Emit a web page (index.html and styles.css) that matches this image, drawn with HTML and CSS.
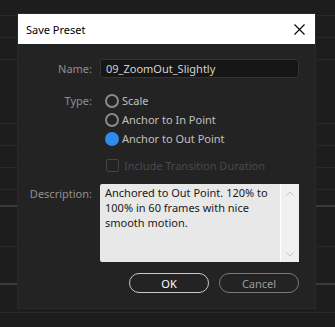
FILE: index.html
```html
<!DOCTYPE html>
<html>
<head>
    <link rel="stylesheet" href="styles.css">
</head>
<body>

    <div class="panel">
        <div class="row" style="height: 15px"></div>
        <div class="row" style="height: 21px"></div>
        <div class="row" style="height: 21px"></div>
        <div class="row" style="height: 63px"></div>
        <div class="row" style="height: 21px"></div>
        <div class="row" style="height: 21px"></div>
        <div class="row" style="height: 21px"></div>
        <div class="row bright" style="height: 15px"></div>
        <div class="row" style="height: 39px"></div>
        <div class="row bright" style="height: 36px"></div>
        <div class="row" style="height: 27px"></div>
        <div class="row" style="height: 22px"></div>
    </div>

    <div class="dialog">
        <div class="titlebar">
            <span>Save Preset</span>
            <svg class="close" width="11" height="11" viewBox="0 0 11 11">
                <path d="M0.5 0.5 L10.5 10.5 M10.5 0.5 L0.5 10.5" stroke="#000" stroke-width="1.1" fill="none"/>
            </svg>
        </div>

        <div class="body">
            <div class="field name-row">
                <label>Name:</label>
                <div class="input">09_ZoomOut_Slightly</div>
            </div>

            <div class="field type-row">
                <label>Type:</label>
                <div class="radios">
                    <div class="radio"><span class="dot"></span>Scale</div>
                    <div class="radio"><span class="dot"></span>Anchor to In Point</div>
                    <div class="radio"><span class="dot on"></span>Anchor to Out Point</div>
                </div>
            </div>

            <div class="field check-row">
                <label></label>
                <div class="check"><span class="box"></span>Include Transition Duration</div>
            </div>

            <div class="field desc-row">
                <label>Description:</label>
                <div class="textarea">
                    <p>Anchored to Out Point. 120% to 100% in 60 frames with nice smooth motion.</p>
                    <div class="scroll">
                        <svg width="8" height="5" viewBox="0 0 8 5"><path d="M0.5 4.5 L4 1 L7.5 4.5" stroke="#c4c4c4" fill="none"/></svg>
                        <svg width="8" height="5" viewBox="0 0 8 5"><path d="M0.5 0.5 L4 4 L7.5 0.5" stroke="#c4c4c4" fill="none"/></svg>
                    </div>
                </div>
            </div>

            <div class="buttons">
                <button class="ok">OK</button>
                <button class="cancel">Cancel</button>
            </div>
        </div>
    </div>

</body>
</html>
```

FILE: styles.css
```css
body {
    margin: 0;
    background-color: #1d1d1d;
    font-family: "Noto Sans", "Open Sans", sans-serif;
    font-size: 11px;
    width: 335px;
    height: 327px;
    overflow: hidden;
    position: relative;
}

.panel {
    display: flex;
    flex-direction: column;
}

.row {
    border-bottom: 1px solid #292929;
}

.row.bright {
    border-bottom: 2px solid #3a3a3a;
}

.dialog {
    position: absolute;
    left: 18px;
    top: 14px;
    width: 297px;
    background-color: #232323;
    box-shadow: 0 0 0 1px #2a2a2a;
}

.titlebar {
    height: 30px;
    background-color: white;
    color: black;
    display: flex;
    align-items: center;
    justify-content: space-between;
    padding: 0 10px 0 8px;
    font-size: 11px;
}

.body {
    padding: 15px 16px 15px 0;
}

.field {
    display: grid;
    grid-template-columns: 74px 1fr;
    column-gap: 8px;
}

.field label {
    color: #8f8f8f;
    text-align: right;
}

.name-row {
    align-items: center;
}

.input {
    height: 17px;
    background-color: #161616;
    border: 1px solid #333;
    border-radius: 3px;
    color: #d2d2d2;
    padding-left: 5px;
    line-height: 17px;
}

.type-row {
    margin-top: 14px;
}

.type-row label {
    line-height: 17px;
}

.radios {
    display: flex;
    flex-direction: column;
    gap: 2px;
}

.radio {
    display: flex;
    align-items: center;
    height: 17px;
    color: #c0c0c0;
    padding-left: 5px;
}

.dot {
    width: 10px;
    height: 10px;
    border: 2px solid #8a8a8a;
    border-radius: 50%;
    margin-right: 3px;
}

.dot.on {
    border-color: #2d8ceb;
    background-color: #2d8ceb;
}

.check-row {
    margin-top: 11px;
}

.check {
    display: flex;
    align-items: center;
    height: 14px;
    padding-left: 6px;
    color: #4a4a4a;
}

.box {
    width: 11px;
    height: 11px;
    border: 1px solid #444;
    border-radius: 2px;
    margin-right: 5px;
}

.desc-row {
    margin-top: 12px;
}

.desc-row label {
    margin-top: 2px;
}

.textarea {
    height: 78px;
    background-color: #e8e8e8;
    border-radius: 2px;
    display: flex;
}

.textarea p {
    flex: 1;
    margin: 0;
    padding: 1px 5px;
    color: #1a1a1a;
    line-height: 15px;
}

.scroll {
    width: 18px;
    background-color: #f0f0f0;
    border-left: 1px solid white;
    display: flex;
    flex-direction: column;
    justify-content: space-between;
    align-items: center;
    padding: 7px 0 5px;
}

.buttons {
    display: flex;
    justify-content: flex-end;
    gap: 10px;
    margin-top: 11px;
}

.buttons button {
    width: 80px;
    height: 20px;
    border-radius: 10px;
    background: transparent;
    font-family: "Noto Sans", "Open Sans", sans-serif;
    font-size: 11px;
    padding: 0;
}

.ok {
    border: 1px solid #c8c8c8;
    color: white;
}

.cancel {
    border: 1px solid #7a7a7a;
    color: #9a9a9a;
}
```
